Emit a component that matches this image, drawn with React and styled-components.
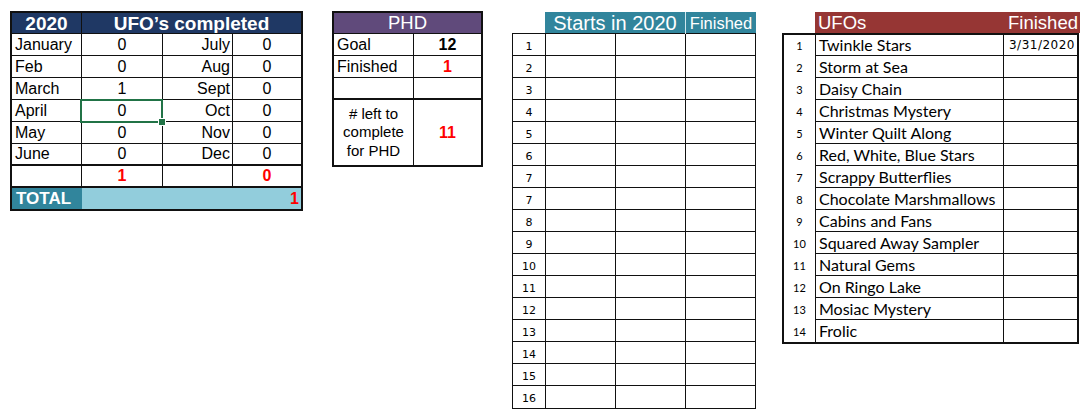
import React from 'react';
import styled, { createGlobalStyle } from 'styled-components';

const line = '#111';

const GlobalStyle = createGlobalStyle`
  html, body { margin: 0; padding: 0; background: #fff; }
  body { font-family: "Liberation Sans", Arial, sans-serif; color: #000; }
  * { box-sizing: border-box; }
`;

const Page = styled.main`
  display: flex;
  align-items: flex-start;
  width: 1092px;
  height: 417px;
  padding: 11px 0 0 10px;
  overflow: hidden;
`;

const Block = styled.section`
  flex: none;
  margin-left: ${p => p.$offset || 0}px;
  margin-top: ${p => p.$drop || 0}px;
`;

const BaseCell = styled.div`
  display: flex;
  align-items: center;
  justify-content: ${p => (p.$align === 'left' ? 'flex-start' : p.$align === 'right' ? 'flex-end' : 'center')};
  padding: 0 ${p => (p.$pad ?? 3)}px;
  border-right: 1px solid ${line};
  color: ${p => (p.$red ? '#ff0000' : 'inherit')};
  font-weight: ${p => (p.$bold ? 700 : 400)};
  white-space: nowrap;
  overflow: hidden;
  &:last-child { border-right: none; }
`;

/* ---------- UFO's completed tally ---------- */
const Tally = styled.div`
  position: relative;
  width: 293px;
  border: 2px solid ${line};
  font-size: 16px;
`;

const TallyTitle = styled.div`
  display: grid;
  grid-template-columns: 70px 1fr;
  height: 21px;
  background: #1f3864;
  border-bottom: 1px solid ${line};
`;

const TitleCell = styled(BaseCell)`
  color: #fff;
  font-size: 19px;
  font-weight: 700;
  padding-top: 1px;
`;

const TallyRow = styled.div`
  display: grid;
  grid-template-columns: 70px 81px 70px 68px;
  height: 22px;
  border-bottom: ${p => (p.$heavy ? 2 : 1)}px solid ${line};
`;

const TotalRow = styled.div`
  display: grid;
  grid-template-columns: 70px 1fr;
  height: 21px;
  font-weight: 700;
`;

const TotalLabel = styled.div`
  display: flex;
  align-items: center;
  padding-left: 4px;
  background: #31859c;
  color: #fff;
  font-size: 17px;
`;

const TotalBar = styled.div`
  display: flex;
  align-items: center;
  justify-content: flex-end;
  padding-right: 2px;
  background: #92cddc;
  color: #ff0000;
`;

const Selection = styled.div`
  position: absolute;
  left: 68px;
  top: 86px;
  width: 83px;
  height: 24px;
  border: 2px solid #217346;
  pointer-events: none;
  &::after {
    content: '';
    position: absolute;
    right: -5px;
    bottom: -5px;
    width: 6px;
    height: 6px;
    background: #217346;
    border: 1px solid #fff;
  }
`;

/* ---------- PHD ---------- */
const Phd = styled.div`
  width: 151px;
  border: 2px solid ${line};
  font-size: 16px;
`;

const PhdTitle = styled.div`
  display: flex;
  align-items: center;
  justify-content: center;
  height: 21px;
  background: #604a7b;
  color: #fff;
  font-size: 18.5px;
  border-bottom: 1px solid ${line};
`;

const PhdRow = styled.div`
  display: grid;
  grid-template-columns: 80px 1fr;
  height: ${p => (p.$tall ? 65 : 22)}px;
  border-bottom: ${p => (p.$heavy ? 2 : 1)}px solid ${line};
  &:last-child { border-bottom: none; }
`;

const PhdNote = styled(BaseCell)`
  white-space: normal;
  text-align: center;
  font-size: 15px;
  line-height: 18.5px;
`;

/* ---------- Starts in 2020 ---------- */
const Starts = styled.div`
  width: 244px;
`;

const StartsTitle = styled.div`
  display: grid;
  grid-template-columns: 140px 1fr;
  width: 211px;
  height: 21px;
  margin-left: 33px;
  background: #31859c;
  color: #fff;
`;

const StartsTitleCell = styled.div`
  display: flex;
  align-items: center;
  justify-content: center;
  font-size: ${p => p.$size}px;
  & + & { border-left: 1px solid #cfe7ee; }
`;

const StartsGrid = styled.div`
  border: 1px solid ${line};
`;

const StartsRow = styled.div`
  display: grid;
  grid-template-columns: 33px 70px 70px 1fr;
  height: 22px;
  border-bottom: 1px solid ${line};
  &:last-child { border-bottom: none; }
`;

const StartsNum = styled(BaseCell)`
  font-family: "DejaVu Sans", Verdana, sans-serif;
  font-size: 11px;
  padding-top: 3px;
`;

/* ---------- UFOs list ---------- */
const Ufo = styled.div`
  width: 297px;
`;

const UfoTitle = styled.div`
  display: flex;
  align-items: center;
  justify-content: space-between;
  width: 265px;
  height: 21px;
  margin-left: 33px;
  padding: 1px 2px 0 3px;
  background: #963634;
  color: #fff;
  font-size: 18.5px;
`;

const UfoGrid = styled.div`
  border: 2px solid ${line};
  font-family: Lato, "Open Sans", sans-serif;
`;

const UfoRow = styled.div`
  display: grid;
  grid-template-columns: 32px 187px 1fr;
  height: 22px;
  &:first-child { height: 21px; }
`;

const UfoNum = styled.div`
  display: flex;
  align-items: flex-end;
  justify-content: center;
  padding-bottom: 4px;
  border-right: 1px solid ${line};
  font-size: 11px;
`;

const UfoCell = styled.div`
  display: flex;
  align-items: center;
  justify-content: ${p => (p.$right ? 'flex-end' : 'flex-start')};
  padding: 0 ${p => (p.$right ? 2 : 3)}px 1px ${p => (p.$right ? 2 : 3)}px;
  border-bottom: 1px solid ${line};
  font-size: 16px;
  white-space: nowrap;
  & + & { border-left: 1px solid ${line}; }
  ${UfoRow}:last-child & { border-bottom: none; }
`;

const UfoDate = styled.span`
  font-family: "DejaVu Sans", Verdana, sans-serif;
  font-size: 12px;
  letter-spacing: 0.5px;
`;

const months = [
  ['January', '0', 'July', '0'],
  ['Feb', '0', 'Aug', '0'],
  ['March', '1', 'Sept', '0'],
  ['April', '0', 'Oct', '0'],
  ['May', '0', 'Nov', '0'],
  ['June', '0', 'Dec', '0'],
];

const startLabels = ['1', '2', '3', '4', '5', '6', '7', '7', '8', '9', '10', '11', '12', '13', '14', '15', '16'];

const ufos = [
  ['Twinkle Stars', '3/31/2020'],
  ['Storm at Sea', ''],
  ['Daisy Chain', ''],
  ['Christmas Mystery', ''],
  ['Winter Quilt Along', ''],
  ['Red, White, Blue Stars', ''],
  ['Scrappy Butterflies', ''],
  ['Chocolate Marshmallows', ''],
  ['Cabins and Fans', ''],
  ['Squared Away Sampler', ''],
  ['Natural Gems', ''],
  ['On Ringo Lake', ''],
  ['Mosiac Mystery', ''],
  ['Frolic', ''],
];

export default function App() {
  return (
    <>
      <GlobalStyle />
      <Page>
        <Block>
          <Tally>
            <TallyTitle>
              <TitleCell>2020</TitleCell>
              <TitleCell>UFO’s completed</TitleCell>
            </TallyTitle>
            {months.map((m, i) => (
              <TallyRow key={m[0]} $heavy={i === months.length - 1}>
                <BaseCell $align="left">{m[0]}</BaseCell>
                <BaseCell>{m[1]}</BaseCell>
                <BaseCell $align="right" $pad={2}>{m[2]}</BaseCell>
                <BaseCell>{m[3]}</BaseCell>
              </TallyRow>
            ))}
            <TallyRow $heavy>
              <BaseCell />
              <BaseCell $red $bold>1</BaseCell>
              <BaseCell />
              <BaseCell $red $bold>0</BaseCell>
            </TallyRow>
            <TotalRow>
              <TotalLabel>TOTAL</TotalLabel>
              <TotalBar>1</TotalBar>
            </TotalRow>
            <Selection />
          </Tally>
        </Block>

        <Block $offset={29}>
          <Phd>
            <PhdTitle>PHD</PhdTitle>
            <PhdRow>
              <BaseCell $align="left">Goal</BaseCell>
              <BaseCell $bold>12</BaseCell>
            </PhdRow>
            <PhdRow>
              <BaseCell $align="left">Finished</BaseCell>
              <BaseCell $bold $red>1</BaseCell>
            </PhdRow>
            <PhdRow $heavy>
              <BaseCell />
              <BaseCell />
            </PhdRow>
            <PhdRow $tall>
              <PhdNote># left to<br />complete<br />for PHD</PhdNote>
              <BaseCell $bold $red>11</BaseCell>
            </PhdRow>
          </Phd>
        </Block>

        <Block $offset={29} $drop={1}>
          <Starts>
            <StartsTitle>
              <StartsTitleCell $size={20}>Starts in 2020</StartsTitleCell>
              <StartsTitleCell $size={16.5}>Finished</StartsTitleCell>
            </StartsTitle>
            <StartsGrid>
              {startLabels.map((n, i) => (
                <StartsRow key={i}>
                  <StartsNum>{n}</StartsNum>
                  <BaseCell />
                  <BaseCell />
                  <BaseCell />
                </StartsRow>
              ))}
            </StartsGrid>
          </Starts>
        </Block>

        <Block $offset={26} $drop={1}>
          <Ufo>
            <UfoTitle>
              <span>UFOs</span>
              <span>Finished</span>
            </UfoTitle>
            <UfoGrid>
              {ufos.map((u, i) => (
                <UfoRow key={u[0]}>
                  <UfoNum>{i + 1}</UfoNum>
                  <UfoCell>{u[0]}</UfoCell>
                  <UfoCell $right>{u[1] && <UfoDate>{u[1]}</UfoDate>}</UfoCell>
                </UfoRow>
              ))}
            </UfoGrid>
          </Ufo>
        </Block>
      </Page>
    </>
  );
}
